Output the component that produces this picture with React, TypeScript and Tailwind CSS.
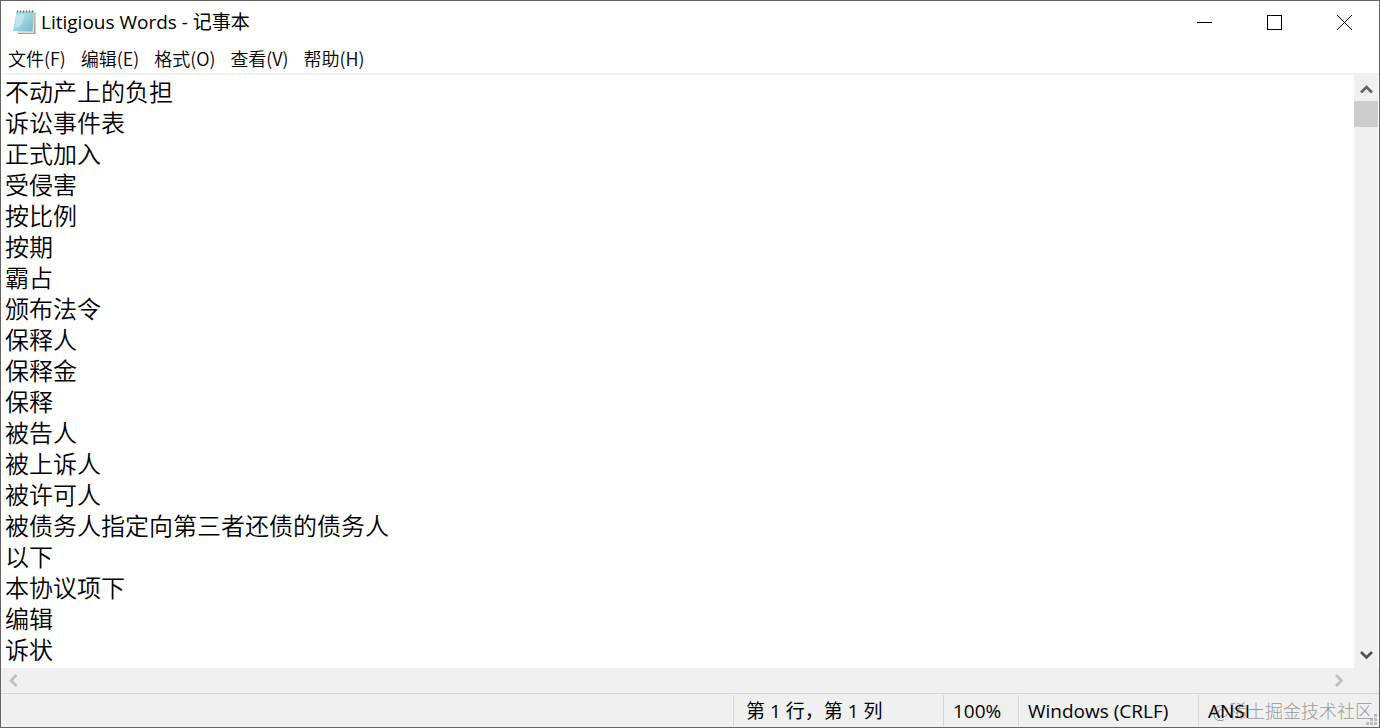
import { useState } from "react";

const words = [
  "不动产上的负担",
  "诉讼事件表",
  "正式加入",
  "受侵害",
  "按比例",
  "按期",
  "霸占",
  "颁布法令",
  "保释人",
  "保释金",
  "保释",
  "被告人",
  "被上诉人",
  "被许可人",
  "被债务人指定向第三者还债的债务人",
  "以下",
  "本协议项下",
  "编辑",
  "诉状",
];

const menus = ["文件(F)", "编辑(E)", "格式(O)", "查看(V)", "帮助(H)"];

function NotepadIcon() {
  return (
    <svg width="24" height="26" viewBox="0 0 24 26" aria-hidden="true">
      <defs>
        <linearGradient id="sheet" x1="0" y1="0" x2="1" y2="1">
          <stop offset="0" stopColor="#b5e1ea" />
          <stop offset="0.5" stopColor="#9dd3df" />
          <stop offset="1" stopColor="#72b4c8" />
        </linearGradient>
      </defs>
      <path d="M5 3 L23 3 L23 25 L6 25 L5 23 Z" fill="#e9e4cf" />
      <path d="M22.500 4 L23.5 3.5 L23.5 25 L6 25 L6 24 L22 24 Z" fill="#a79f7f" />
      <path d="M4.500 2.500 L22 2.500 L20.500 22.500 L1 22 Z" fill="url(#sheet)" />
      <path d="M4.500 6 L2.500 19 Q10 20 13 5 Z" fill="#d8f0f4" opacity="0.5" />
      <path d="M6 1.500l-1 2M9 1.500l-1 2M12 1.500l-1 2M15 1.500l-1 2M18 1.500l-1 2M21 1.500l-1 2" stroke="#55686c" strokeWidth="1.200" />
    </svg>
  );
}

function Chevron({ d }: { d: string }) {
  return (
    <svg width="13" height="13" viewBox="0 0 13 13" fill="none" aria-hidden="true">
      <path d={d} stroke="currentColor" strokeWidth="2.600" />
    </svg>
  );
}

export default function App() {
  const [text, setText] = useState(words.join("\n"));

  return (
    <div className="flex h-screen flex-col border border-[#666464] bg-white font-['Noto_Sans_CJK_SC',sans-serif] text-lg font-[350] leading-6 text-black">
      <header className="flex h-[42px] shrink-0 items-center pl-[11px]">
        <NotepadIcon />
        <h1 className="ml-[5px] flex-1 font-['Open_Sans','Noto_Sans_CJK_SC',sans-serif] text-[19px] font-normal">Litigious Words - 记事本</h1>
        <button type="button" aria-label="最小化" className="flex h-full w-[70px] items-center justify-center">
          <svg width="15" height="15" viewBox="0 0 15 15" shapeRendering="crispEdges">
            <path d="M0 7.500H15" stroke="#000" />
          </svg>
        </button>
        <button type="button" aria-label="最大化" className="flex h-full w-[70px] items-center justify-center">
          <svg width="15" height="15" viewBox="0 0 15 15" fill="none" shapeRendering="crispEdges">
            <rect x="0.500" y="0.500" width="14" height="14" stroke="#000" />
          </svg>
        </button>
        <button type="button" aria-label="关闭" className="flex h-full w-[70px] items-center justify-center">
          <svg width="15" height="15" viewBox="0 0 15 15">
            <path d="M0 0L15 15M15 0L0 15" stroke="#000" />
          </svg>
        </button>
      </header>

      <nav className="flex h-8 shrink-0 items-center gap-[15px] border-b-2 border-[#f0f0f0] pl-[7px]">
        {menus.map((m) => (
          <button key={m} type="button">
            {m}
          </button>
        ))}
      </nav>

      <main className="flex min-h-0 flex-1">
        <textarea
          aria-label="文本编辑器"
          value={text}
          onChange={(e) => setText(e.target.value)}
          spellCheck={false}
          className="min-w-0 flex-1 resize-none overflow-hidden whitespace-pre pl-1 text-2xl font-[350] leading-[31px] outline-none"
        />
        <div className="mr-px flex w-6 flex-col bg-[#f0f0f0]">
          <button type="button" aria-label="向上滚动" className="flex h-[26px] items-center justify-center pt-0.5 text-[#606060]">
            <Chevron d="M1 9.500L6.500 4L12 9.500" />
          </button>
          <div className="h-[26px] bg-[#cdcdcd]" />
          <div className="flex-1" />
          <button type="button" aria-label="向下滚动" className="flex h-[26px] items-center justify-center pb-0.5 text-[#505050]">
            <Chevron d="M1 4L6.500 9.500L12 4" />
          </button>
        </div>
      </main>

      <div className="flex h-[25px] shrink-0 items-center justify-between bg-[#f0f0f0] pl-[6px] pr-[34px] text-[#bfbfbf]">
        <button type="button" aria-label="向左滚动">
          <Chevron d="M9.500 1L4 6.500L9.500 12" />
        </button>
        <button type="button" aria-label="向右滚动">
          <Chevron d="M4 1L9.500 6.500L4 12" />
        </button>
      </div>

      <footer className="relative flex h-[34px] shrink-0 border-t border-[#d7d7d7] bg-[#f0f0f0] py-px font-['Open_Sans','Noto_Sans_CJK_SC',sans-serif] text-[19px] font-normal">
        <div className="flex-1" />
        <div className="flex w-[210px] items-center border-l border-[#d7d7d7] pl-3">第 1 行，第 1 列</div>
        <div className="flex w-[75px] items-center border-l border-[#d7d7d7] pl-[9px]">100%</div>
        <div className="flex w-[180px] items-center border-l border-[#d7d7d7] pl-[9px]">Windows (CRLF)</div>
        <div className="relative z-10 flex w-[181px] items-center border-l border-[#d7d7d7] pl-[9px]">ANSI</div>
        <svg className="absolute bottom-0.5 right-0.5" width="11" height="11" viewBox="0 0 11 11" fill="#bcbcbc" aria-hidden="true">
          <path d="M8 0h3v3H8zM4 4h3v3H4zM8 4h3v3H8zM0 8h3v3H0zM4 8h3v3H4zM8 8h3v3H8z" />
        </svg>
        <span className="absolute right-[6px] top-1 whitespace-nowrap font-['Noto_Sans_CJK_SC',sans-serif] text-lg font-light leading-6 text-[#808080]/80">
          @稀土掘金技术社区
        </span>
      </footer>
    </div>
  );
}
